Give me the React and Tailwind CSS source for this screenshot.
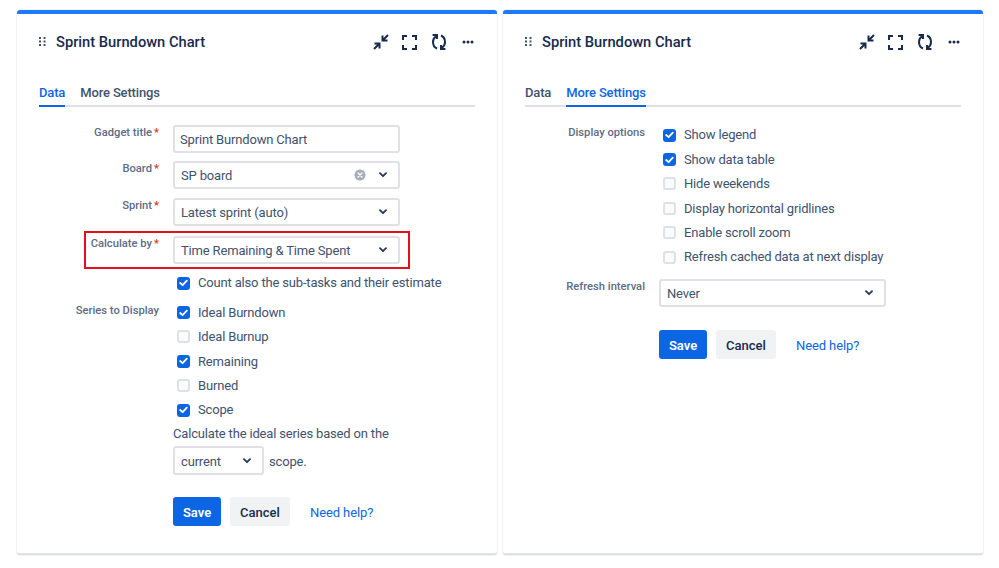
function Chevron() {
  return (
    <svg width="8" height="6" viewBox="0 0 8 6" fill="none" className="shrink-0">
      <path d="M1 1.2 L4 4.2 L7 1.2" stroke="#253858" strokeWidth="1.8" strokeLinecap="round" strokeLinejoin="round" />
    </svg>
  );
}

function Check({ on, label }) {
  return (
    <div className="flex items-center h-[24.4px]">
      <div className={on ? "w-[13px] h-[13px] rounded-[3px] bg-[#0c66e4] flex items-center justify-center ml-[4px] shrink-0" : "w-[13px] h-[13px] rounded-[3px] bg-[#fafbfc] border-2 border-[#dfe1e6] ml-[4px] shrink-0"}>
        {on && (
          <svg width="9" height="8" viewBox="0 0 9 8" fill="none">
            <path d="M1.2 4 L3.6 6.2 L7.8 1.6" stroke="#fff" strokeWidth="1.8" strokeLinecap="round" strokeLinejoin="round" />
          </svg>
        )}
      </div>
      <span className="ml-[8px] text-[13px] tracking-[-0.17px] text-[#42526e] whitespace-nowrap">{label}</span>
    </div>
  );
}

function Label({ text, req, className = "" }) {
  return (
    <div className={`w-[142px] text-right text-[11.2px] leading-[14px] text-[#5e6c84] font-medium whitespace-nowrap shrink-0 ${className}`}>
      {text}
      {req && <span className="text-[#de350b] ml-[2px]">*</span>}
    </div>
  );
}

function Field({ value, clear, chevron = true, w = "w-[227px]", h = "h-[28px]", px = "pl-[6px] pr-[11px]" }) {
  return (
    <div className={`${w} ${h} ${px} flex items-center border-2 border-[#dfe1e6] rounded-[3px] bg-white shrink-0`}>
      <span className="flex-1 pt-[1px] text-[13px] tracking-[-0.17px] text-[#42526e] whitespace-nowrap">{value}</span>
      {clear && (
        <svg width="12" height="12" viewBox="0 0 12 12" className="mr-[13px]">
          <circle cx="6" cy="6" r="5.5" fill="#a5adba" />
          <path d="M4 4 L8 8 M8 4 L4 8" stroke="#fff" strokeWidth="1.4" strokeLinecap="round" />
        </svg>
      )}
      {chevron && <Chevron />}
    </div>
  );
}

function Buttons() {
  return (
    <div className="flex items-center h-[29px]">
      <button className="w-[48px] h-[29px] pt-[1px] rounded-[3px] bg-[#0c66e4] text-white text-[13px] font-semibold">Save</button>
      <button className="w-[60px] h-[29px] pt-[1px] ml-[9px] rounded-[3px] bg-[#f1f2f4] text-[#172b4d] text-[13px] font-medium">Cancel</button>
      <span className="ml-[20px] pt-[1px] text-[13px] tracking-[-0.1px] text-[#0c66e4]">Need help?</span>
    </div>
  );
}

function Header() {
  return (
    <div className="flex items-center h-[20px] mt-[18px] pl-[22px] pr-[23px]">
      <svg width="8" height="10" viewBox="0 0 8 10" fill="#42526e" className="shrink-0">
        <rect x="0" y="0" width="2" height="2" /><rect x="4.5" y="0" width="2" height="2" />
        <rect x="0" y="3.5" width="2" height="2" /><rect x="4.5" y="3.5" width="2" height="2" />
        <rect x="0" y="7" width="2" height="2" /><rect x="4.5" y="7" width="2" height="2" />
      </svg>
      <span className="ml-[9px] text-[14.7px] font-medium text-[#172b4d] whitespace-nowrap">Sprint Burndown Chart</span>
      <div className="ml-auto flex items-center">
        <svg width="16" height="16" viewBox="0 0 16 16" fill="none" stroke="#172b4d" strokeWidth="2">
          <path d="M15 1 L10 6 M9.5 1.5 V6.5 H14.5" />
          <path d="M1 15 L6 10 M1.5 9.5 H6.5 V14.5" />
        </svg>
        <svg width="15" height="15" viewBox="0 0 15 15" fill="none" stroke="#172b4d" strokeWidth="2" className="ml-[13px]">
          <path d="M1 5 V1 H5 M10 1 H14 V5 M14 10 V14 H10 M5 14 H1 V10" />
        </svg>
        <svg width="16" height="16" viewBox="0 0 16 16" fill="none" stroke="#172b4d" strokeWidth="2" className="ml-[14px]">
          <path d="M6 14.5 C3 13.2 2 11 2 8 C2 5.5 3 3.6 5 2.4" />
          <path d="M1.6 1 H6 V5" />
          <path d="M10 1.5 C13 2.8 14 5 14 8 C14 10.5 13 12.4 11 13.6" />
          <path d="M14.4 15 H10 V11" />
        </svg>
        <svg width="12" height="4" viewBox="0 0 12 4" fill="#172b4d" className="ml-[15px]">
          <circle cx="2" cy="2" r="1.5" /><circle cx="6" cy="2" r="1.5" /><circle cx="10" cy="2" r="1.5" />
        </svg>
      </div>
    </div>
  );
}

function Tabs({ active }) {
  const tab = (name) =>
    name === active
      ? "h-[23px] -mb-[2px] border-b-2 border-[#0c66e4] text-[#0c66e4] text-[13px] tracking-[-0.15px] font-medium leading-[18px]"
      : "h-[23px] -mb-[2px] text-[#42526e] text-[13px] tracking-[-0.15px] font-medium leading-[18px]";
  return (
    <div className="flex gap-[15px] mt-[32px] mx-[22px] border-b-2 border-[#dfe1e6] h-[23px]">
      <div className={tab("Data")}>Data</div>
      <div className={tab("More")}>More Settings</div>
    </div>
  );
}

function Row({ label, req, children, className = "", labelClass = "mt-[1px]" }) {
  return (
    <div className={`flex items-start ${className}`}>
      <Label text={label} req={req} className={labelClass} />
      <div className="ml-[14px]">{children}</div>
    </div>
  );
}

function Card({ children }) {
  return (
    <div className="w-[480px] h-[545px] bg-white rounded-[3px] border-t-4 border-t-[#1d7afc] border-b-2 border-b-[#dfe1e6] shadow-[0_0_0_1px_#f1f2f4] shrink-0">
      {children}
    </div>
  );
}

export default function App() {
  return (
    <div className="w-[999px] h-[568px] bg-white flex gap-[6px] pt-[10px] pl-[17px] overflow-hidden" style={{ fontFamily: 'Roboto, sans-serif' }}>
      <Card>
        <Header />
        <Tabs active="Data" />
        <Row label="Gadget title" req className="mt-[18px]">
          <Field value="Sprint Burndown Chart" chevron={false} px="px-[5px]" />
        </Row>
        <Row label="Board" req className="mt-[8px]">
          <Field value="SP board" clear />
        </Row>
        <Row label="Sprint" req className="mt-[9px]">
          <Field value="Latest sprint (auto)" />
        </Row>
        <div className="relative mt-[10px]">
          <Row label="Calculate by" req>
            <Field value="Time Remaining & Time Spent" />
          </Row>
          <div className="absolute left-[67px] top-[-5px] w-[326px] h-[38px] border-2 border-[#e3101a] pointer-events-none" />
        </div>
        <div className="ml-[156px] mt-[7px]">
          <Check on label="Count also the sub-tasks and their estimate" />
        </div>
        <Row label="Series to Display" className="mt-[5px]" labelClass="mt-[4px]">
          <Check on label="Ideal Burndown" />
          <Check label="Ideal Burnup" />
          <Check on label="Remaining" />
          <Check label="Burned" />
          <Check on label="Scope" />
          <div className="text-[13px] tracking-[-0.17px] text-[#42526e] leading-[20px] mt-[1px] pt-[1px] h-[21px] whitespace-nowrap">Calculate the ideal series based on the</div>
          <div className="flex items-center mt-[2px]">
            <Field value="current" w="w-[91px]" h="h-[29px]" />
            <span className="ml-[5px] pt-[1px] text-[13px] tracking-[-0.17px] text-[#42526e]">scope.</span>
          </div>
          <div className="mt-[22px]">
            <Buttons />
          </div>
        </Row>
      </Card>
      <Card>
        <Header />
        <Tabs active="More" />
        <Row label="Display options" className="mt-[16px]" labelClass="mt-[3px]">
          <Check on label="Show legend" />
          <Check on label="Show data table" />
          <Check label="Hide weekends" />
          <Check label="Display horizontal gridlines" />
          <Check label="Enable scroll zoom" />
          <Check label="Refresh cached data at next display" />
        </Row>
        <Row label="Refresh interval" className="mt-[10px]">
          <Field value="Never" />
          <div className="mt-[23px]">
            <Buttons />
          </div>
        </Row>
      </Card>
    </div>
  );
}
